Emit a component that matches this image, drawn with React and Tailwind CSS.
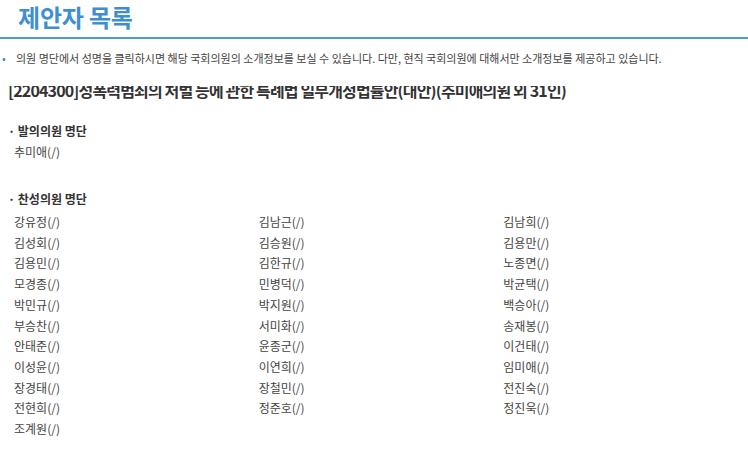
import React from 'react';

const names = [
  '강유정', '김남근', '김남희',
  '김성회', '김승원', '김용만',
  '김용민', '김한규', '노종면',
  '모경종', '민병덕', '박균택',
  '박민규', '박지원', '백승아',
  '부승찬', '서미화', '송재봉',
  '안태준', '윤종군', '이건태',
  '이성윤', '이연희', '임미애',
  '장경태', '장철민', '전진숙',
  '전현희', '정준호', '정진욱',
  '조계원',
];

const App = () => {
  return (
    <div className="w-[748px] h-[458px] bg-white overflow-hidden font-['Noto_Sans_CJK_KR',sans-serif] text-[#333]">
      {/* Header */}
      <h1 className="h-[37px] pl-[18px] text-[24px] leading-[34px] font-bold text-[#3d8fd1] tracking-[-0.2px]">
        제안자 목록
      </h1>
      <div className="h-[2px] bg-[#4a9ad4]" />

      {/* Notice */}
      <p className="mt-[11px] flex items-center text-[11px] leading-[16px] text-[#444]">
        <span className="w-[16px] pl-[2px] text-[#3d8fd1]">•</span>
        의원 명단에서 성명을 클릭하시면 해당 국회의원의 소개정보를 보실 수 있습니다. 다만, 현직 국회의원에 대해서만 소개정보를 제공하고 있습니다.
      </p>

      {/* Bill title (top edge is cut off in the source page) */}
      <div className="mt-[20px] h-[14px] overflow-hidden pl-[8px]">
        <div className="-mt-[7px] text-[16px] leading-[22px] font-bold text-[#333] tracking-[-0.85px] whitespace-nowrap">
          [2204300]성폭력범죄의 처벌 등에 관한 특례법 일부개정법률안(대안)(추미애의원 외 31인)
        </div>
      </div>

      {/* Proposer */}
      <div className="mt-[22px] pl-[8px] text-[12px] leading-[18px] font-bold">
        · 발의의원 명단
      </div>
      <div className="mt-[3px] pl-[14px] text-[12px] leading-[18px] text-[#444]">
        추미애(/)
      </div>

      {/* Supporters */}
      <div className="mt-[29px] pl-[8px] text-[12px] leading-[18px] font-bold">
        · 찬성의원 명단
      </div>
      <div className="mt-[4px] pl-[14px] grid grid-cols-3 text-[12px] leading-[20.7px] text-[#444]">
        {names.map((name) => (
          <div key={name}>{name}(/)</div>
        ))}
      </div>
    </div>
  );
};

export default App;
